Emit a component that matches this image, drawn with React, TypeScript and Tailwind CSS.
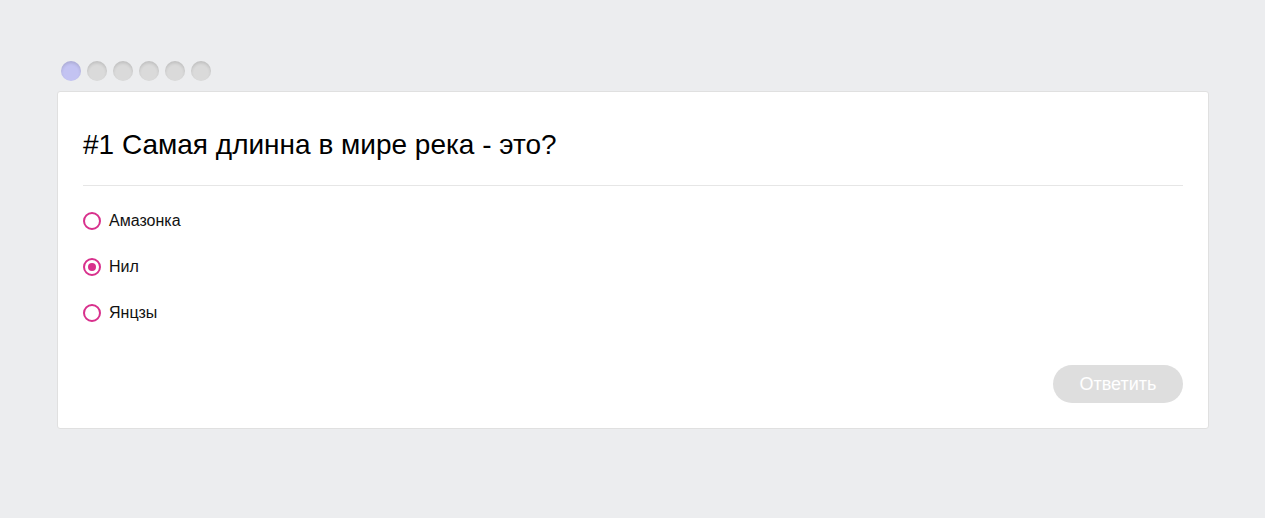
import React from "react";

const options = ["Амазонка", "Нил", "Янцзы"];

export default function App() {
  const [selected, setSelected] = React.useState(1);
  const dots = [0, 1, 2, 3, 4, 5];

  return (
    <div
      className="min-h-screen bg-[#ecedef] pt-[61px] px-[57px]"
      style={{ fontFamily: '"Liberation Sans", Arial, sans-serif' }}
    >
      <div className="flex gap-[6px] pl-[4px] mb-[10px]">
        {dots.map((d) => (
          <div
            key={d}
            className={
              d === 0
                ? "w-[20px] h-[20px] rounded-full bg-[#c3c3f2] shadow-[inset_0_2px_3px_rgba(0,0,0,0.12)]"
                : "w-[20px] h-[20px] rounded-full bg-[#dadada] shadow-[inset_0_2px_3px_rgba(0,0,0,0.12)]"
            }
          />
        ))}
      </div>
      <div className="w-[1152px] bg-white border border-[#e0e0e0] rounded-[3px] px-[25px]">
        <div className="pt-[35px] pb-[22px] border-b border-[#e6e6e6]">
          <h1 className="text-[28px] leading-[36px] text-black">
            #1 Самая длинна в мире река - это?
          </h1>
        </div>
        <div className="pt-[12px] flex flex-col">
          {options.map((o, i) => (
            <label
              key={o}
              className="h-[46px] flex items-center gap-[8px] cursor-pointer"
              onClick={() => setSelected(i)}
            >
              <span className="w-[18px] h-[18px] rounded-full border-2 border-[#d8308c] flex items-center justify-center">
                {selected === i && (
                  <span className="w-[8px] h-[8px] rounded-full bg-[#d8308c]" />
                )}
              </span>
              <span className="text-[16px] text-[#111]">{o}</span>
            </label>
          ))}
        </div>
        <div className="flex justify-end pt-[29px] pb-[25px]">
          <button className="w-[130px] h-[38px] rounded-full bg-[#dedede] text-white text-[18px]">
            Ответить
          </button>
        </div>
      </div>
    </div>
  );
}
